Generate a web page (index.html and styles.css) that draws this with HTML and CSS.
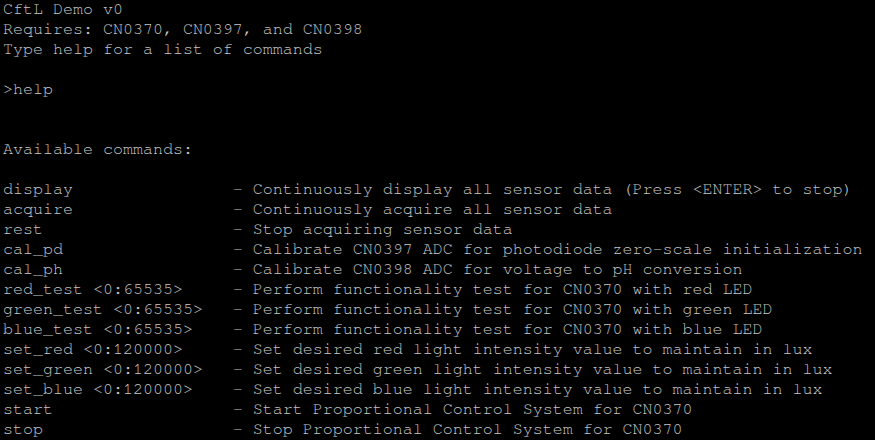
FILE: index.html
```html
<!DOCTYPE html>
<html>
<head>
<meta charset="utf-8">
<link rel="stylesheet" href="styles.css">
</head>
<body>
<pre class="term">CftL Demo v0
Requires: CN0370, CN0397, and CN0398
Type help for a list of commands

&gt;help


Available commands:

display                - Continuously display all sensor data (Press &lt;ENTER&gt; to stop)
acquire                - Continuously acquire all sensor data
rest                   - Stop acquiring sensor data
cal_pd                 - Calibrate CN0397 ADC for photodiode zero-scale initialization
cal_ph                 - Calibrate CN0398 ADC for voltage to pH conversion
red_test &lt;0:65535&gt;     - Perform functionality test for CN0370 with red LED
green_test &lt;0:65535&gt;   - Perform functionality test for CN0370 with green LED
blue_test &lt;0:65535&gt;    - Perform functionality test for CN0370 with blue LED
set_red &lt;0:120000&gt;     - Set desired red light intensity value to maintain in lux
set_green &lt;0:120000&gt;   - Set desired green light intensity value to maintain in lux
set_blue &lt;0:120000&gt;    - Set desired blue light intensity value to maintain in lux
start                  - Start Proportional Control System for CN0370
stop                   - Stop Proportional Control System for CN0370</pre>
</body>
</html>
```

FILE: styles.css
```css
html, body {
  margin: 0;
  padding: 0;
  background: #000;
  height: 100%;
  overflow: hidden;
}
.term {
  margin: -1px 0 0 0;
  padding: 0 0 0 3px;
  font-family: "Nimbus Mono PS", "Nimbus Mono L", "FreeMono", "Courier 10 Pitch", "Liberation Mono", monospace;
  font-size: 16.667px;
  line-height: 20px;
  color: #c8c8c8;
  white-space: pre;
}
```
